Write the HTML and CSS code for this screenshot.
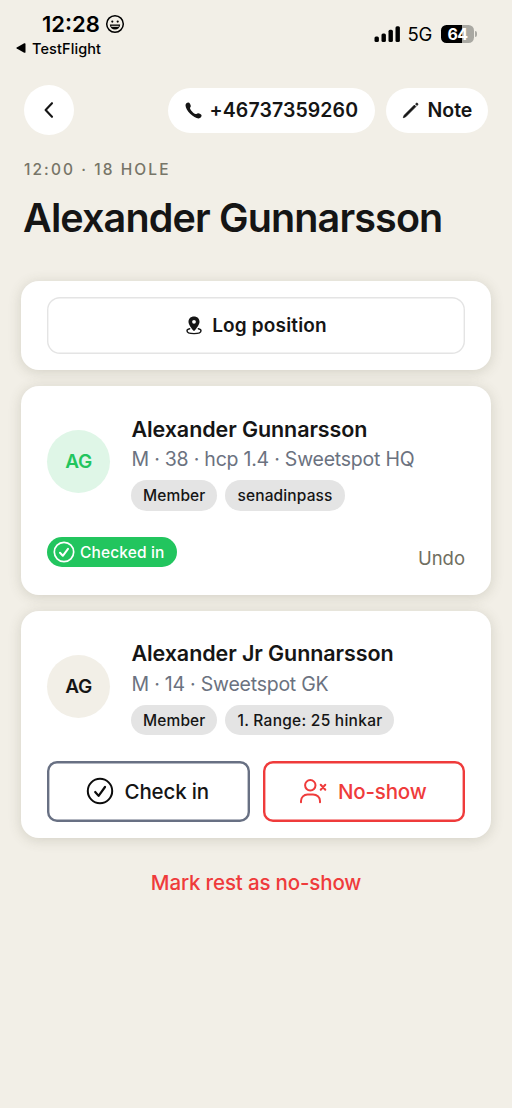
FILE: index.html
```html
<!DOCTYPE html>
<html lang="en">
<head>
<meta charset="utf-8">
<title>Booking</title>
<link rel="stylesheet" href="styles.css">
</head>
<body>
<div class="screen">
  <div class="status">
    <div class="status-left">
      <div class="clock"><span class="time">12:28</span>
        <svg class="face" viewBox="0 0 20 20" width="20" height="20"><circle cx="10" cy="10" r="8.3" fill="none" stroke="#000" stroke-width="1.5"/><circle cx="7.3" cy="7.6" r="1.1"/><circle cx="12.7" cy="7.6" r="1.1"/><path d="M4.8 10.500H15.200C15 13.600 12.800 15.500 10 15.500S5 13.600 4.800 10.500Z"/><path d="M6.300 12.300H13.700" stroke="#f2efe7" stroke-width="1"/></svg>
      </div>
      <div class="return"><svg width="10" height="10" viewBox="0 0 10 10"><path d="M.7 4.400 8.200.300Q9.500-.2 9.500 1V9Q9.500 10.200 8.200 9.700L.7 5.600Q0 5 .7 4.400Z"/></svg><span class="app">TestFlight</span></div>
    </div>
    <div class="status-right">
      <svg width="27" height="18" viewBox="0 0 27 18"><rect x=".5" y="11.500" width="4.400" height="5.500" rx="1.500"/><rect x="7.500" y="8.500" width="4.400" height="8.500" rx="1.500"/><rect x="14.500" y="4.800" width="4.400" height="12.200" rx="1.500"/><rect x="21.500" y="1.300" width="4.400" height="15.700" rx="1.500"/></svg>
      <span class="network">5G</span>
      <div class="battery"><span class="level">64</span></div><i class="nub"></i>
    </div>
  </div>

  <div class="toolbar">
    <div class="back"><svg width="12" height="18" viewBox="0 0 12 18"><path d="M9 2.200 2.600 9l6.400 6.800" fill="none" stroke="#151515" stroke-width="2.100" stroke-linecap="round" stroke-linejoin="round"/></svg></div>
    <div class="pill phone"><svg width="17" height="17" viewBox="0 0 17 17"><path fill="#151515" d="M.5 3.200C.5 1.700 1.900.400 3.300.400C4.500.400 5.800 2.600 5.800 3.900C5.800 4.900 4.900 5.300 5 6.200C5.300 8 8.500 11.400 10.600 12C11.600 12.200 12 11.300 13 11.200C14.300 11.100 16.600 12.500 16.600 13.600C16.600 15.200 15.200 16.400 13.700 16.400C8.700 16.400.500 8.300.500 3.200Z"/></svg><span class="number">+46737359260</span></div>
    <div class="pill note"><svg width="17" height="17" viewBox="0 0 17 17"><path d="M1.300 15.700 2.200 13.300 12.400 3.100 13.900 4.600 3.700 14.800ZM13.500 2 14.100 1.400Q14.900.700 15.600 1.400T15.600 2.900L15 3.500Z" fill="#151515" stroke="#151515" stroke-width=".800" stroke-linejoin="round"/></svg><span class="note-label">Note</span></div>
  </div>

  <div class="eyebrow">12:00 · 18 HOLE</div>
  <h1 class="title">Alexander Gunnarsson</h1>

  <div class="cards">
    <section class="card log-card">
      <div class="log"><svg width="16" height="19" viewBox="0 0 16 19"><path fill="#151515" fill-rule="evenodd" d="M8 .400C4.700.400 2.500 2.600 2.500 5.700C2.500 8.700 5.600 12.200 7.300 14.600Q8 15.500 8.700 14.600C10.400 12.200 13.500 8.700 13.500 5.700C13.500 2.600 11.300.400 8 .400ZM8 3.900a1.900 1.900 0 1 1 0 3.800a1.900 1.900 0 0 1 0-3.800Z"/><path d="M3.700 12.700C2 13.100 1 13.800 1 14.700C1 16.400 4 17.600 8 17.600S15 16.400 15 14.700C15 13.800 14 13.100 12.300 12.700" fill="none" stroke="#151515" stroke-width="1.400" stroke-linecap="round"/></svg><span class="log-label">Log position</span></div>
    </section>

    <section class="card player-card first">
      <div class="player">
        <div class="avatar active">AG</div>
        <div class="details">
          <div class="name">Alexander Gunnarsson</div>
          <div class="meta">M · 38 · hcp 1.4 · Sweetspot HQ</div>
          <div class="tags"><span class="tag">Member</span><span class="tag">senadinpass</span></div>
        </div>
      </div>
      <div class="state">
        <div class="checked"><svg width="22" height="22" viewBox="0 0 22 22" fill="none" stroke="#fff" stroke-linecap="round" stroke-linejoin="round"><circle cx="11" cy="11" r="9.700" stroke-width="1.700"/><path d="m7 11.800 2.800 3 5.200-7" stroke-width="2"/></svg><span>Checked in</span></div>
        <div class="undo">Undo</div>
      </div>
    </section>

    <section class="card player-card second">
      <div class="player">
        <div class="avatar">AG</div>
        <div class="details">
          <div class="name">Alexander Jr Gunnarsson</div>
          <div class="meta">M · 14 · Sweetspot GK</div>
          <div class="tags"><span class="tag">Member</span><span class="tag range">1. Range: 25 hinkar</span></div>
        </div>
      </div>
      <div class="actions">
        <div class="action"><svg width="28" height="28" viewBox="0 0 28 28" fill="none" stroke="#0c0c0c" stroke-linecap="round" stroke-linejoin="round"><circle cx="14" cy="14" r="12.200" stroke-width="2"/><path d="m9.200 15 3.400 3.900 6.400-8.900" stroke-width="2.200"/></svg><span>Check in</span></div>
        <div class="action danger"><svg width="28" height="26" viewBox="0 0 28 26" fill="none" stroke="#ef3b3b" stroke-width="2" stroke-linecap="round"><circle cx="11.300" cy="7.300" r="5.200"/><path d="M2 24.300V23C2 19.300 5 16.500 8.500 16.500H14C17.800 16.500 21 19.300 21 23V24.300M21.700 6.700 26.300 11.700M26.300 6.700 21.700 11.700"/></svg><span>No-show</span></div>
      </div>
    </section>
  </div>

  <div class="mark-rest"><span>Mark rest as no-show</span></div>
</div>
</body>
</html>
```
FILE: styles.css
```css
* { box-sizing: border-box; }
body { margin: 0; background: #f2efe7; color: #151515; font-family: Inter, sans-serif; }
svg { display: block; flex: none; }
.screen { width: 512px; height: 1108px; overflow: hidden; background: #f2efe7; }

.status { height: 84.500px; display: flex; justify-content: space-between; color: #000; }
.status-left { padding: 11px 0 0 16px; }
.clock { display: flex; align-items: center; gap: 5px; height: 26px; padding-left: 26px; font-size: 22px; font-weight: 600; }
.return { display: flex; align-items: center; gap: 6px; height: 20px; margin-top: 1px; font-size: 14.5px; font-weight: 500; letter-spacing: .100px; }
.status-right { display: flex; align-items: center; height: 20px; margin-top: 24px; padding-right: 35px; }
.network { margin-left: 7px; font-size: 18.500px; letter-spacing: -.300px; }
.battery { width: 33px; height: 18px; margin-left: 9px; border-radius: 5.500px; background: linear-gradient(90deg, #000 65%, #a9a8a2 65%); color: #fff; display: flex; align-items: center; justify-content: center; font-size: 16px; font-weight: 700; letter-spacing: -.500px; }
.nub { width: 2px; height: 6px; margin-left: 1px; border-radius: 0 3px 3px 0; background: #aaa9a3; }

.toolbar { height: 51.500px; padding: 0 24px 0 23.500px; display: flex; align-items: center; }
.back { width: 50px; height: 50px; border-radius: 50%; background: #fff; display: flex; align-items: center; justify-content: center; margin-right: auto; }
.pill { height: 45.500px; border-radius: 23px; background: #fff; display: flex; align-items: center; font-size: 19.500px; font-weight: 600; white-space: nowrap; }
.phone { width: 207px; padding-left: 16.500px; gap: 8px; margin-right: 10.500px; letter-spacing: .100px; }
.note { width: 102.500px; padding-left: 16px; gap: 9px; }

.eyebrow { margin: 23.500px 0 0 24px; height: 20px; line-height: 20px; font-size: 15.500px; font-weight: 500; letter-spacing: 2.070px; color: #777568; }
.title { margin: 14.500px 0 0 23px; height: 48px; line-height: 48px; font-size: 39.500px; font-weight: 600; letter-spacing: -.860px; white-space: nowrap; }

.cards { margin: 39px 21px 0; display: flex; flex-direction: column; gap: 16px; }
.card { padding: 0 26px; border-radius: 18px; background: #fff; box-shadow: 0 2px 13px rgba(80, 78, 55, .19); }
.log-card { height: 89px; padding-top: 15.500px; }
.log { height: 57.500px; box-shadow: inset 0 0 0 1.400px #e4e4e4; border-radius: 13px; display: flex; align-items: center; justify-content: center; gap: 10px; padding: 1px 0 0 1px; font-size: 19px; font-weight: 600; letter-spacing: .170px; }
.first { height: 208.500px; padding-top: 29.500px; }
.second { height: 227px; padding-top: 29.500px; }
.player { display: flex; }
.avatar { width: 63px; height: 63px; margin: 14.500px 21.500px 0 0; border-radius: 50%; background: #f2efe7; display: flex; align-items: center; justify-content: center; font-size: 19px; font-weight: 600; letter-spacing: -.300px; }
.avatar.active { background: #dff6e7; color: #22c55e; }
.details { white-space: nowrap; }
.name { height: 27px; line-height: 27px; font-size: 21.500px; font-weight: 600; letter-spacing: -.090px; }
.meta { height: 27px; margin-top: 3.500px; line-height: 27px; font-size: 19.500px; letter-spacing: -.230px; color: #6b7280; }
.tags { display: flex; gap: 8px; margin: 7px 0 0 -.500px; }
.tag { height: 30.500px; line-height: 31.500px; padding: 0 12px; border-radius: 16px; background: #e4e4e4; font-size: 15.500px; font-weight: 500; letter-spacing: .130px; }
.range { letter-spacing: .260px; }
.state { display: flex; justify-content: space-between; margin-top: 26.500px; }
.checked { width: 130px; height: 30px; padding-left: 6px; border-radius: 15px; background: #22c55e; color: #fff; display: flex; align-items: center; gap: 5px; font-size: 15.500px; font-weight: 500; letter-spacing: .130px; white-space: nowrap; }
.undo { height: 24px; line-height: 24px; margin-top: 9px; font-size: 18.500px; color: #706e60; }
.actions { display: flex; gap: 13px; margin-top: 26px; }
.action { flex: 1; height: 60.500px; box-shadow: inset 0 0 0 2.400px #687083; border-radius: 10px; display: flex; align-items: center; justify-content: center; gap: 10.500px; padding-right: 1.500px; font-size: 20.500px; font-weight: 500; letter-spacing: -.150px; }
.action.danger { box-shadow: inset 0 0 0 2.400px #ef3b3b; color: #ef3b3b; }
.mark-rest { margin-top: 31px; height: 28px; line-height: 28px; text-align: center; font-size: 20.500px; font-weight: 500; letter-spacing: -.150px; color: #ef3b3b; }
```
